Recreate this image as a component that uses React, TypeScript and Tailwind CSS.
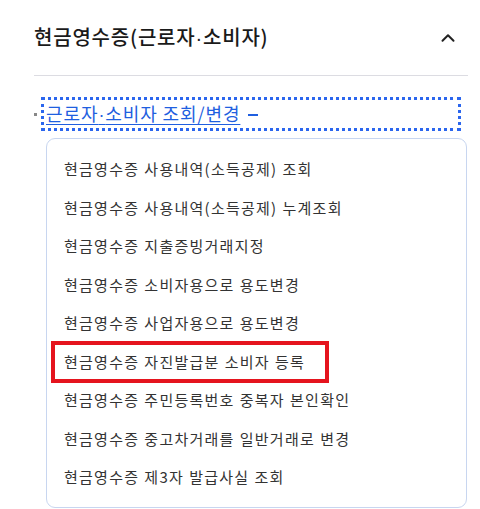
import { ChevronUp } from 'lucide-react'

const items = [
  '현금영수증 사용내역(소득공제) 조회',
  '현금영수증 사용내역(소득공제) 누계조회',
  '현금영수증 지출증빙거래지정',
  '현금영수증 소비자용으로 용도변경',
  '현금영수증 사업자용으로 용도변경',
  '현금영수증 자진발급분 소비자 등록',
  '현금영수증 주민등록번호 중복자 본인확인',
  '현금영수증 중고차거래를 일반거래로 변경',
  '현금영수증 제3자 발급사실 조회',
]

// index of the highlighted menu entry
const selected = 5

// narrow middle dot, the CJK one is full width
const Dot = () => <span className="font-['Liberation_Sans',sans-serif]">·</span>

export default function App() {
  return (
    <div className="bg-white w-[480px] h-[509px] overflow-hidden font-['Noto_Sans_CJK_KR',sans-serif]">
      <div className="pl-[34px] pr-[12px]">
        <div className="flex items-center justify-between h-[76px] border-b border-[#dcdce2]">
          <h2 className="text-[20px] font-medium text-[#1a1a1a] tracking-[0.8px]">
            현금영수증(근로자<Dot />소비자)
          </h2>
          <ChevronUp size={22} strokeWidth={2.2} className="text-[#222] mr-[9px]" />
        </div>

        <div className="pt-[21px] flex items-center">
          <span className="w-[3px] h-[3px] bg-[#888] mr-[4px] mt-[1px]" />
          <div className="flex-1 mr-[7px] h-[34px] border-[3px] border-dotted border-[#2b66ee] flex items-center pl-[2px]">
            <a href="#" className="text-[18px] leading-[24px] text-[#1f5fe0] underline underline-offset-[3px] tracking-[0.9px]">
              근로자<Dot />소비자 조회/변경
            </a>
            <span className="ml-[8px] w-[10px] h-[2px] bg-[#1f5fe0] mt-[2px]" />
          </div>
        </div>

        <ul className="mt-[7px] ml-[12px] mr-[1px] h-[370px] border border-[#c8d6f0] rounded-[9px] pt-[11px] pl-[17px]">
          {items.map((label, i) => (
            <li key={label} className="relative h-[38.5px] flex items-center">
              {i === selected && (
                <span className="absolute -left-[13px] w-[278px] -top-[2px] -bottom-[2px] border-4 border-[#e5141e]" />
              )}
              <span className="relative text-[15px] text-[#333] tracking-[1.25px] [word-spacing:0.5px]">{label}</span>
            </li>
          ))}
        </ul>
      </div>
    </div>
  )
}
